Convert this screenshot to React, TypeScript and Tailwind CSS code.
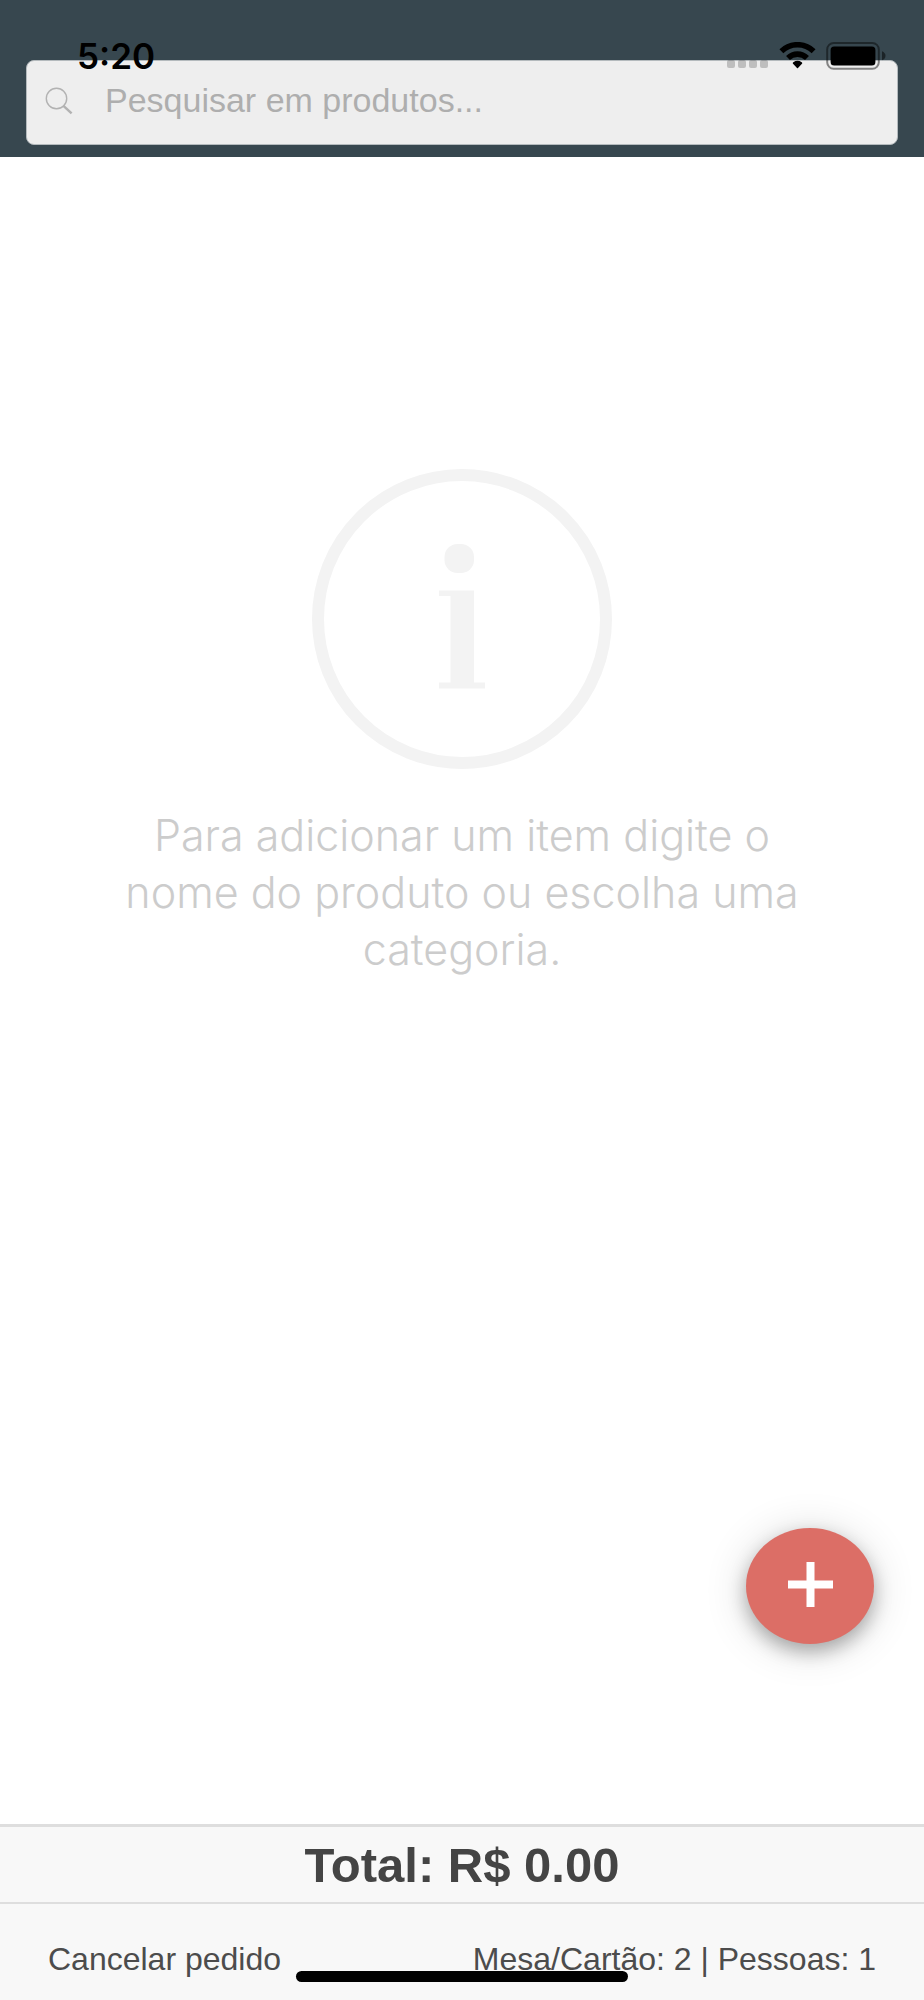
import { useState } from 'react';

function StatusBar() {
    return (
        <div className="pointer-events-none absolute inset-x-0 top-0 flex items-center justify-between pt-9 pr-[38px] pl-[77px]">
            <span className="font-['Inter',sans-serif] text-[35px] leading-10 font-semibold text-black">5:20</span>
            <div className="flex items-center">
                {/* Signal dots */}
                <svg className="mr-2.5" width="42" height="28" viewBox="0 0 42 28" aria-hidden="true">
                    <g fill="#000" fillOpacity="0.2">
                        <rect x="0" y="18" width="8" height="8" rx="2" />
                        <rect x="11" y="18" width="8" height="8" rx="2" />
                        <rect x="22" y="18" width="8" height="8" rx="2" />
                        <rect x="33" y="18" width="8" height="8" rx="2" />
                    </g>
                </svg>
                {/* Wifi */}
                <svg className="mr-2.5" width="37" height="28" viewBox="0 0 37 28" aria-hidden="true">
                    <g fill="none" stroke="#000">
                        <path d="M2.4 9.2A23.2 23.2 0 0 1 34.6 9.2" strokeWidth="5.6" />
                        <path d="M9 16A13.6 13.6 0 0 1 28 16" strokeWidth="5.6" />
                    </g>
                    <path d="M13.8 21.4Q13.6 20.7 14.3 20.3Q18.5 17.4 22.7 20.3Q23.4 20.7 23.2 21.4L19 26Q18.5 26.5 18 26Z" fill="#000" />
                </svg>
                {/* Battery */}
                <svg width="60" height="28" viewBox="0 0 60 28" aria-hidden="true">
                    <rect x="1.2" y="1" width="51.6" height="25.8" rx="6.5" fill="none" stroke="#000" strokeOpacity="0.45" strokeWidth="2" />
                    <rect x="4.6" y="4.4" width="44.8" height="19" rx="3.5" fill="#000" />
                    <path d="M56 9.3Q59.5 10.8 59.5 13.8T56 18.3Z" fill="#000" fillOpacity="0.5" />
                </svg>
            </div>
        </div>
    );
}

function SearchIcon() {
    return (
        <svg className="mb-1" width="28" height="28" viewBox="0 0 28 28" fill="none" stroke="#b2b2b2" aria-hidden="true">
            <circle cx="11.5" cy="11.5" r="10.2" strokeWidth="1.4" />
            <path d="M18.2 18.6L26.6 26.4" strokeWidth="2.4" />
        </svg>
    );
}

function InfoIcon() {
    return (
        <svg width="300" height="300" viewBox="0 0 300 300" aria-hidden="true">
            <circle cx="150" cy="150" r="144" fill="none" stroke="#f3f3f3" strokeWidth="12" />
            <rect x="132.5" y="75" width="29.5" height="29" rx="13" fill="#f3f3f3" />
            <path d="M127 121.5H162V213.5H173V219.5H127V213.5H138.5V127H127Z" fill="#f3f3f3" />
        </svg>
    );
}

export default function App() {
    const [query, setQuery] = useState('');

    return (
        <div className="relative flex min-h-screen flex-col bg-white font-['Liberation_Sans',Arial,sans-serif] text-[#444444]">
            {/* Search header */}
            <header className="bg-[#37474f] px-[26px] pt-15 pb-3">
                <label className="flex h-[85px] items-center gap-8 rounded-lg border border-[#b4babd] bg-[#eeeeee] pr-5 pl-[18px]">
                    <SearchIcon />
                    <input
                        type="text"
                        value={query}
                        onChange={(e) => setQuery(e.target.value)}
                        placeholder="Pesquisar em produtos..."
                        aria-label="Pesquisar em produtos"
                        className="h-full min-w-0 flex-1 bg-transparent pb-1 text-[34px] text-[#444444] outline-none placeholder:text-[#aeaeae]"
                    />
                </label>
            </header>

            {/* Empty order */}
            <main className="relative flex flex-1 flex-col items-center px-28 pt-78">
                <InfoIcon />
                <p className="mt-[38px] max-w-[700px] text-center font-['Inter',sans-serif] text-[43px] leading-[57px] font-light text-[#cccccc]">
                    Para adicionar um item digite o nome do produto ou escolha uma categoria.
                </p>
                <button
                    type="button"
                    aria-label="Adicionar item"
                    className="absolute right-[50px] bottom-45 flex h-29 w-32 items-center justify-center rounded-[50%] bg-[#dc6e66] shadow-[0_8px_18px_rgba(0,0,0,0.28),0_4px_44px_rgba(0,0,0,0.16)]"
                >
                    <svg className="mb-1" width="45" height="45" viewBox="0 0 45 45" fill="#fff" aria-hidden="true">
                        <path d="M18.5 0H26.5V18.5H45V26.5H26.5V45H18.5V26.5H0V18.5H18.5Z" />
                    </svg>
                </button>
            </main>

            {/* Order summary */}
            <footer className="bg-[#f8f8f8]">
                <div className="border-t-3 border-b-2 border-[#dedede] pt-2 pb-1.5 text-center text-[49px] leading-[61px] font-bold">
                    Total: R$ 0.00
                </div>
                <div className="flex items-center justify-between px-12 pt-[35px] pb-[21px] text-[32px] leading-10 text-[#4c4c4c]">
                    <button type="button">Cancelar pedido</button>
                    <span>Mesa/Cartão: 2 | Pessoas: 1</span>
                </div>
            </footer>

            <StatusBar />
            {/* Home indicator */}
            <div className="pointer-events-none absolute inset-x-0 bottom-[18px] flex justify-center">
                <div className="h-[11px] w-[36%] rounded-full bg-black" />
            </div>
        </div>
    );
}
